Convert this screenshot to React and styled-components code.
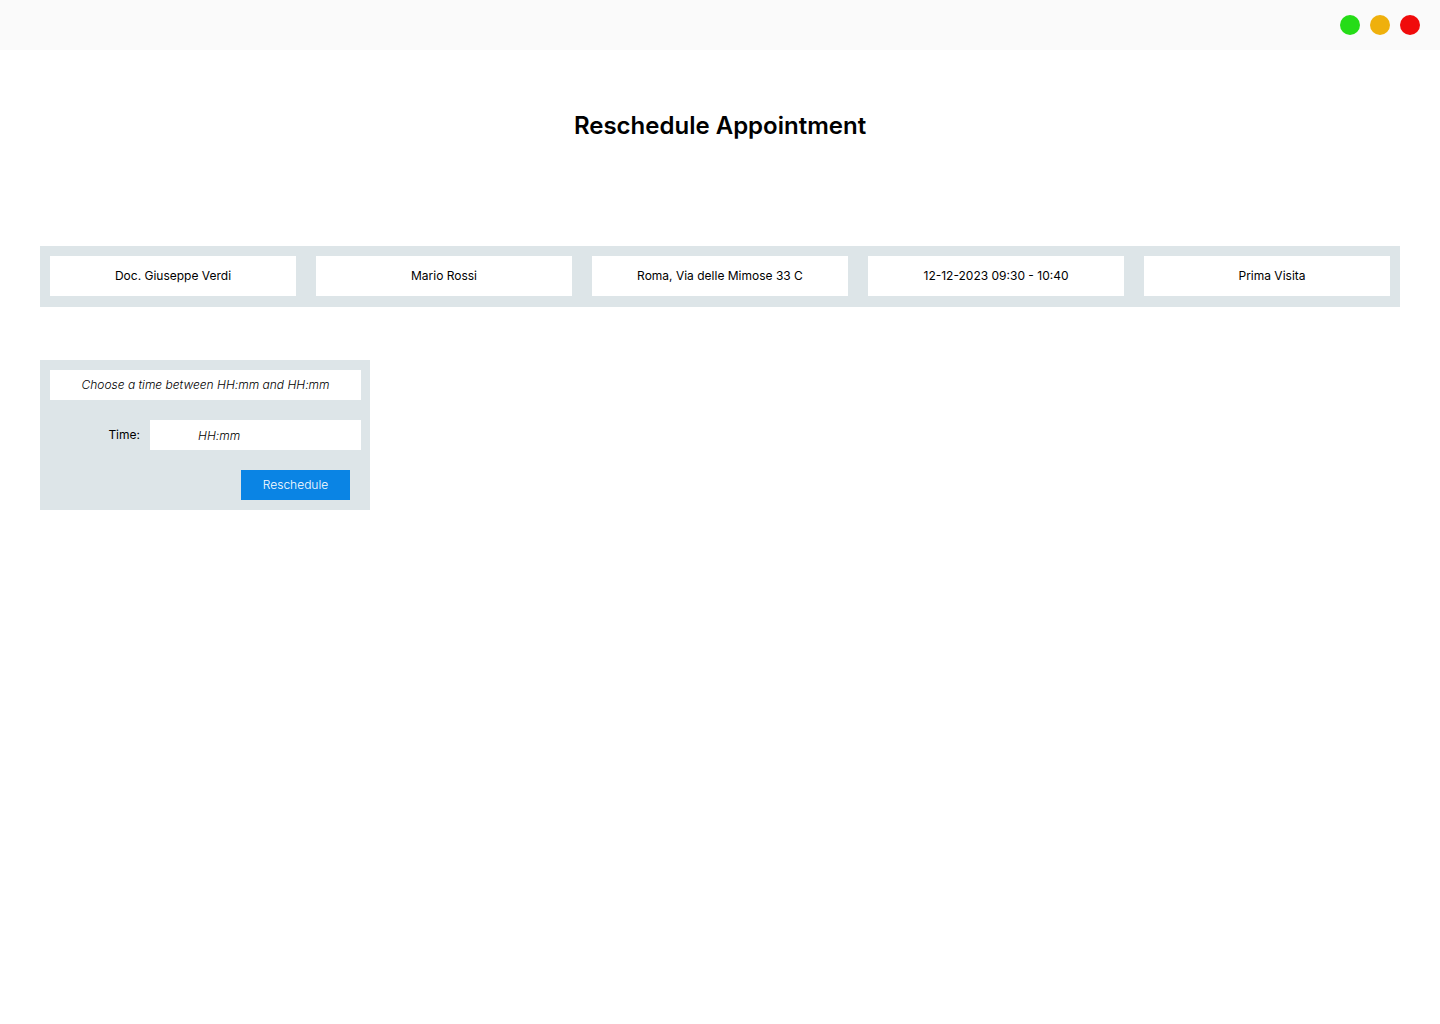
import React, { useState } from "react";
import styled, { createGlobalStyle } from "styled-components";

const GlobalStyle = createGlobalStyle`
  *, *::before, *::after { box-sizing: border-box; }
  body {
    margin: 0;
    background: #ffffff;
    color: #000000;
    font-family: Inter, "Liberation Sans", sans-serif;
    font-size: 12px;
    line-height: 16px;
  }
`;

const TitleBar = styled.header`
  display: flex;
  align-items: center;
  justify-content: flex-end;
  gap: 10px;
  height: 50px;
  padding: 0 20px;
  background: #fafafa;
`;

const WindowButton = styled.button`
  width: 20px;
  height: 20px;
  padding: 0;
  border: 0;
  border-radius: 50%;
  background: ${({ $color }) => $color};
  cursor: pointer;
`;

const Content = styled.main`
  display: flex;
  flex-direction: column;
  padding: 60px 40px;
`;

const Title = styled.h1`
  margin: 0 0 104px;
  font-size: 24px;
  font-weight: 600;
  line-height: 32px;
  text-align: center;
`;

const Summary = styled.ul`
  display: grid;
  grid-template-columns: 246fr repeat(3, 256fr) 246fr;
  gap: 20px;
  margin: 0 0 53px;
  padding: 10px 10px 11px;
  list-style: none;
  background: #dde5e8;
`;

const SummaryItem = styled.li`
  display: flex;
  align-items: center;
  justify-content: center;
  height: 40px;
  background: #ffffff;

  &:last-child {
    padding-left: 10px;
  }
`;

const Form = styled.form`
  display: flex;
  flex-direction: column;
  gap: 20px;
  width: 330px;
  max-width: 100%;
  padding: 10px 9px 10px 10px;
  background: #dde5e8;
`;

const Hint = styled.p`
  margin: 0;
  padding: 7px 0;
  background: #ffffff;
  font-style: italic;
  font-weight: 300;
  text-align: center;
`;

const Field = styled.div`
  display: grid;
  grid-template-columns: 90px 1fr;
  gap: 10px;
  align-items: center;
`;

const Label = styled.label`
  text-align: right;
`;

const TimeInput = styled.input`
  width: 100%;
  height: 30px;
  padding: 0 48px;
  border: 0;
  border-radius: 0;
  background: #ffffff;
  color: #000000;
  font: inherit;
  font-style: italic;
  font-weight: 300;

  &::placeholder {
    color: #000000;
    opacity: 1;
  }
`;

const Actions = styled.div`
  display: flex;
  justify-content: flex-end;
  padding-right: 11px;
`;

const SubmitButton = styled.button`
  width: 109px;
  height: 30px;
  padding: 0;
  border: 0;
  background: #0a84e4;
  color: #ffffff;
  font: inherit;
  font-weight: 300;
  cursor: pointer;
`;

const windowButtons = [
  { label: "Minimize", color: "#25dc17" },
  { label: "Maximize", color: "#efb00c" },
  { label: "Close", color: "#f00b0b" },
];

const appointment = [
  "Doc. Giuseppe Verdi",
  "Mario Rossi",
  "Roma, Via delle Mimose 33 C",
  "12-12-2023 09:30 - 10:40",
  "Prima Visita",
];

export default function App() {
  const [time, setTime] = useState("");

  return (
    <>
      <GlobalStyle />
      <TitleBar>
        {windowButtons.map(({ label, color }) => (
          <WindowButton key={label} type="button" aria-label={label} $color={color} />
        ))}
      </TitleBar>
      <Content>
        <Title>Reschedule Appointment</Title>
        <Summary>
          {appointment.map((detail) => (
            <SummaryItem key={detail}>{detail}</SummaryItem>
          ))}
        </Summary>
        <Form onSubmit={(event) => event.preventDefault()}>
          <Hint id="time-hint">Choose a time between HH:mm and HH:mm</Hint>
          <Field>
            <Label htmlFor="time">Time:</Label>
            <TimeInput
              id="time"
              type="text"
              placeholder="HH:mm"
              aria-describedby="time-hint"
              value={time}
              onChange={(event) => setTime(event.target.value)}
            />
          </Field>
          <Actions>
            <SubmitButton type="submit">Reschedule</SubmitButton>
          </Actions>
        </Form>
      </Content>
    </>
  );
}
